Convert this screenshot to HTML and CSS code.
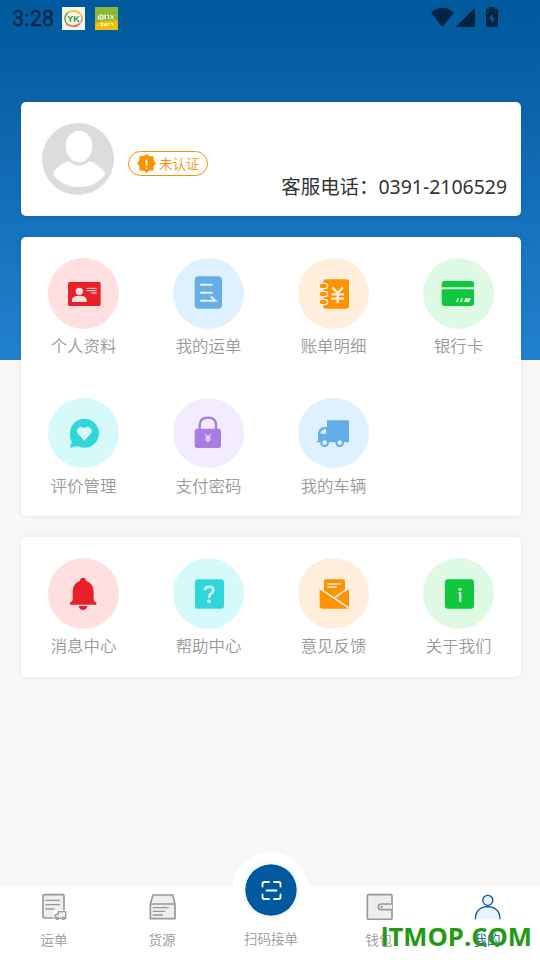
FILE: index.html
```html
<!DOCTYPE html>
<html lang="zh-CN">
<head>
<meta charset="utf-8">
<title>我的</title>
<link rel="stylesheet" href="styles.css">
</head>
<body>
<div class="app">
  <header class="status">
    <span class="time">3:28</span>
    <svg class="app-a" viewBox="186 21 69 69"><path fill="#f2f4ef" d="M186 21h69v69h-69z"/><path d="M198 42Q220 23 242 42" fill="none" stroke="#f1c51e" stroke-width="5"/><path d="M202 39Q188 55 200 70" fill="none" stroke="#58a044" stroke-width="4"/><path d="M198 70Q220 87 238 72" fill="none" stroke="#e4673c" stroke-width="5"/><path d="M243 43Q253 59 237 72" fill="none" stroke="#ee9952" stroke-width="4"/><text x="202" y="65" font-size="27" font-weight="700" fill="#42943a" textLength="37" lengthAdjust="spacingAndGlyphs">YK</text></svg>
    <svg class="app-b" viewBox="285 21 69 69"><path fill="#8bb83c" d="M285 21h69v69h-69z"/><path fill="#f4bd08" d="M285 69l25-6 44-2v29h-69z"/><path d="M295 47v12M300 45h7v13h-7zM312 45v13M316 43v15M321 46h5v12M332 44l9 14M341 46l-10 11M301 69h6v8h-6M314 70v7h6v-7M325 69v8M331 70h7v6" fill="none" stroke="#fff" stroke-width="3"/></svg>
    <svg class="signals" viewBox="63 18 204 66"><path fill="#03243f" d="M63 38Q97 9 132 38L97 81zM195 23v58h-58zM228 30q0-4 4-4h6v-5h15v5h7q4 0 4 4v47q0 4-4 4h-28q-4 0-4-4z"/><path fill="#07559b" d="M248 38v16h8l-11 18V58h-8z"/><path d="M233 42v-8h8M257 33v8" fill="none" stroke="#07559b" stroke-width="2"/></svg>
  </header>

  <main class="content">
    <section class="card profile">
      <svg class="avatar" viewBox="66 84 216 216"><circle cx="174" cy="192" r="108" fill="#dcdcdc"/><ellipse cx="177" cy="154" rx="40" ry="47" fill="#fff"/><path fill="#fff" d="M98 236Q112 211 145 198Q177 226 210 198Q242 211 256 237Q228 276 177 276Q126 276 98 236z"/></svg>
      <span class="badge"><svg viewBox="349 177 58 58"><path fill="#ff9000" d="M378 177l8 6 13 1 1 13 7 9-7 8-1 13-13 1-8 7-8-7-13-1-1-13-7-8 7-9 1-13 13-1z"/><path d="M378 194v20M378 218v5" stroke="#fff" stroke-width="5"/></svg>未认证</span>
      <p class="phone">客服电话：0391-2106529</p>
    </section>

    <section class="card grid services">
      <a class="item"><svg class="icon red" viewBox="84 69 213 213"><rect x="144" y="141" width="98" height="72" rx="5" fill="#e72128"/><g fill="#ffdfe0"><circle cx="178" cy="169" r="11"/><path d="M156 201v-6q0-13 22-13t22 13v6z"/></g><path d="M199 160h31M199 167h31M214 174h16" stroke="#ffdfe0" stroke-width="3"/></svg><span>个人资料</span></a>
      <a class="item"><svg class="icon blue" viewBox="459 69 213 213"><rect x="524" y="124" width="82" height="97" rx="12" fill="#65ade6"/><path d="M543 149h33M543 173h33M543 197h43l-12-11" fill="none" stroke="#dff1ff" stroke-width="6" stroke-linecap="round"/></svg><span>我的运单</span></a>
      <a class="item"><svg class="icon orange" viewBox="84 69 213 213"><rect x="160" y="133" width="77" height="88" rx="8" fill="#ff9200"/><g fill="#ff9200" stroke="#ffeedc" stroke-width="4"><rect x="147" y="145" width="26" height="16" rx="8"/><rect x="147" y="169" width="26" height="16" rx="8"/><rect x="147" y="193" width="26" height="16" rx="8"/></g><path d="M187 157l16 17 16-17M203 174v31M184 178h38M184 191h38" fill="none" stroke="#ffeedc" stroke-width="7"/></svg><span>账单明细</span></a>
      <a class="item"><svg class="icon green" viewBox="459 69 213 213"><rect x="515" y="138" width="97" height="75" rx="9" fill="#0fc83e"/><path d="M514 160h99" stroke="#dffae4" stroke-width="6"/><path fill="#dffae4" d="M562 190h5l-4 11h-5zM574 190h5l-4 11h-5zM586 190h16l-4 11h-16z"/></svg><span>银行卡</span></a>
      <a class="item short"><svg class="icon cyan" viewBox="84 39 213 210" preserveAspectRatio="none"><path fill="#2fd6da" d="M150 189q3-9 5-18-6-12-5-26a43.500 43.500 0 1 1 23 38q-12 1-23 6z"/><path fill="#d6f9fa" d="M193 167l-18-19q-9-11 0-19 10-8 18 1 9-9 18-1 9 8 0 19z"/></svg><span>评价管理</span></a>
      <a class="item short"><svg class="icon purple" viewBox="459 39 213 210" preserveAspectRatio="none"><path d="M539 134v-13q0-23 25-23t24 23v13" fill="none" stroke="#a87be5" stroke-width="7"/><rect x="524" y="131" width="79" height="58" rx="8" fill="#a87be5"/><path d="M556 148l8 10 8-10M564 158v14M555 159h18M555 165h18" fill="none" stroke="#f3ecff" stroke-width="3.5"/></svg><span>支付密码</span></a>
      <a class="item short"><svg class="icon blue" viewBox="84 39 213 210" preserveAspectRatio="none"><path fill="#65ade6" d="M171 106h63q3 0 3 3v60q0 3-4 3h-93v-4h4v-23q2-18 20-19h7z"/><path fill="#dff1ff" d="M168 132v14h-17q4-14 17-14z"/><g fill="#dff1ff" stroke="#65ade6" stroke-width="6"><circle cx="164" cy="173" r="10"/><circle cx="209" cy="173" r="10"/></g></svg><span>我的车辆</span></a>
    </section>

    <section class="card grid support">
      <a class="item"><svg class="icon red" viewBox="84 69 213 213"><path fill="#e72128" d="M180 137q1-9 9-9t9 9q23 9 23 33v24q0 6 8 8v7h-79v-7q8-2 8-8v-24q0-24 22-33zM176 213h26q-2 12-13 12t-13-12z"/></svg><span>消息中心</span></a>
      <a class="item"><svg class="icon cyan" viewBox="459 69 213 213"><rect x="525" y="133" width="87" height="88" rx="9" fill="#2fd6da"/><path d="M555 166q0-11 13-11 12 0 12 10 0 7-8 12-5 4-5 12" fill="none" stroke="#d6f9fa" stroke-width="7.500"/><circle cx="567" cy="199" r="5.500" fill="#d6f9fa"/></svg><span>帮助中心</span></a>
      <a class="item"><svg class="icon orange" viewBox="84 69 213 213"><path fill="#ff9200" d="M149 162l13 9v-31q0-7 8-7h48q7 0 7 7v31l12-9v59h-80q-8 0-8-8z"/><path d="M149 160l88 59M193 189l44-32M172 147h42M172 156h28" fill="none" stroke="#ffeedc" stroke-width="5"/></svg><span>意见反馈</span></a>
      <a class="item"><svg class="icon green" viewBox="459 69 213 213"><rect x="525" y="133" width="87" height="88" rx="9" fill="#0fc83e"/><circle cx="570" cy="163" r="5" fill="#dffae4"/><path fill="#dffae4" d="M565 171h9v29h-7v-25h-2z"/></svg><span>关于我们</span></a>
    </section>
  </main>

  <nav class="tabs">
    <a class="tab"><svg class="tab-icon" viewBox="123 144 81 81"><rect x="129" y="149" width="63" height="70" rx="4" fill="#eee" stroke="#999" stroke-width="5"/><path d="M136 166h44M136 179h44M136 192h27" stroke="#999" stroke-width="4"/><path fill="#fff" d="M160 196h44v29h-44z"/><path d="M175 200h22v20h-32v-10l10-3z" fill="#eee" stroke="#999" stroke-width="4"/><g fill="#eee" stroke="#999" stroke-width="4"><circle cx="172" cy="220" r="3.500"/><circle cx="190" cy="220" r="3.500"/></g></svg><span>运单</span></a>
    <a class="tab"><svg class="tab-icon" viewBox="448 144 81 81"><path d="M460 150h59l7 27v44h-74v-44zM452 177h74" fill="#eee" stroke="#999" stroke-width="5"/><path d="M459 188h48M459 199h38M459 210h31" stroke="#999" stroke-width="4"/></svg><span>货源</span></a>
    <a class="tab scan"><span class="scan-ring"><svg viewBox="0 0 52 52"><circle cx="26" cy="26" r="25.8" fill="#00599f"/><path d="M17.5 22.5v-2.500q0-2 2-2h4.500M29 18h4.500q2 0 2 2v2.500M35.500 30.500v2.500q0 2-2 2H29M24 35h-4.500q-2 0-2-2v-2.500M21.500 26.500h10" fill="none" stroke="#fff" stroke-width="1.800" stroke-linecap="round"/></svg></span><span>扫码接单</span></a>
    <a class="tab shifted"><svg class="tab-icon" viewBox="286 144 81 81"><rect x="290" y="149" width="74" height="74" rx="4" fill="#eee" stroke="#999" stroke-width="5"/><path d="M364 177h-33q-8 0-8 8.500t8 8.500h33" fill="#eee" stroke="#999" stroke-width="5"/><circle cx="333" cy="186" r="3.500" fill="#999"/></svg><span>钱包</span></a>
    <a class="tab shifted active"><svg class="tab-icon" viewBox="613 144 81 81"><circle cx="654.500" cy="166" r="15" fill="#e8f4ff" stroke="#00599f" stroke-width="4"/><path d="M617 223q0-36 37-38 37 2 37 38" fill="#e8f4ff" stroke="#00599f" stroke-width="4"/></svg><span>我的</span></a>
  </nav>
  <div class="watermark"><span class="plain">I</span>TMOP.COM</div>
</div>
</body>
</html>
```

FILE: styles.css
```css
* { box-sizing: border-box; }
body { margin: 0; font-family: "Noto Sans", "Noto Sans CJK SC", sans-serif; }
.app {
  position: relative;
  display: flex;
  flex-direction: column;
  width: 540px;
  height: 960px;
  overflow: hidden;
  background: linear-gradient(#00589c, #2281ce) 0 0 / 100% 360px no-repeat #f7f7f7;
}
svg { display: block; flex: none; }
.status { display: flex; align-items: center; height: 37px; padding-left: 12px; }
.time { width: 50px; font: 400 21.5px/37px Roboto, sans-serif; letter-spacing: .2px; color: #032544; -webkit-text-stroke: .3px #032544; }
.app-a, .app-b { width: 23px; height: 23px; font-family: "Liberation Sans", sans-serif; }
.app-b { margin-left: 10px; }
.signals { width: 68px; height: 22px; margin: -3px 0 0 313px; }
.content { flex: 1; display: flex; flex-direction: column; gap: 21px; padding: 65px 19px 0 21px; }
.card { background: #fff; border-radius: 5px; box-shadow: 0 0 5px rgba(0, 0, 0, .07); }
.profile { display: flex; height: 114px; padding: 21px 14px 0 21px; }
.avatar { width: 72px; height: 72px; }
.badge {
  display: flex;
  align-items: center;
  gap: 3px;
  width: 80px;
  height: 25px;
  margin: 28px 0 0 14px;
  padding: 0 0 1px 8px;
  border: 1px solid #ff9000;
  border-radius: 13px;
  color: #ff9000;
  font: 350 13.5px/22px "Noto Sans CJK SC", sans-serif;
  white-space: nowrap;
}
.badge svg { width: 19px; height: 19px; }
.phone { margin: 50px 0 0 auto; font-size: 19.45px; line-height: 28px; color: #333; white-space: nowrap; font-weight: 400; }
.grid { display: grid; grid-template-columns: repeat(4, 125px); grid-auto-rows: 140px; }
.services { height: 279px; }
.support { height: 140px; }
.item { display: flex; flex-direction: column; align-items: center; padding-top: 21px; font: 350 16.4px/24px "Noto Sans CJK SC", sans-serif; color: #999; }
.icon { width: 71px; height: 71px; border-radius: 50%; margin-bottom: 4px; }
.short .icon { height: 70px; margin-bottom: 5px; }
.red { background: #ffdfe0; }
.blue { background: #dff1ff; }
.orange { background: #ffeedc; }
.green { background: #dffae4; }
.cyan { background: #d6f9fa; }
.purple { background: #f3ecff; }
.tabs { display: grid; grid-template-columns: repeat(5, 1fr); height: 74px; background: #fff; }
.tab { display: flex; flex-direction: column; align-items: center; padding-top: 7px; color: #999; font: 350 13.5px/20px "Noto Sans CJK SC", sans-serif; }
.tab-icon { width: 27px; height: 27px; margin-bottom: 9px; }
.shifted { padding-left: 2px; }
.scan { padding: 0 0 0 2px; }
.scan-ring {
  display: flex;
  justify-content: center;
  width: 77px;
  height: 77px;
  margin: -34px 0 -1px -2px;
  padding: 11.5px 0 0 1px;
  border-radius: 50%;
  background: #fff;
}
.scan-ring svg { width: 52px; height: 52px; border-radius: 50%; box-shadow: 0 0 6px #d7edf8; }
.active { color: #00599f; }
.watermark {
  position: absolute;
  left: 381px;
  top: 919px;
  font: 700 25.6px/36px "Open Sans", sans-serif;
  color: #249a12;
  white-space: nowrap;
}
.plain { font-family: Roboto, sans-serif; }
```
